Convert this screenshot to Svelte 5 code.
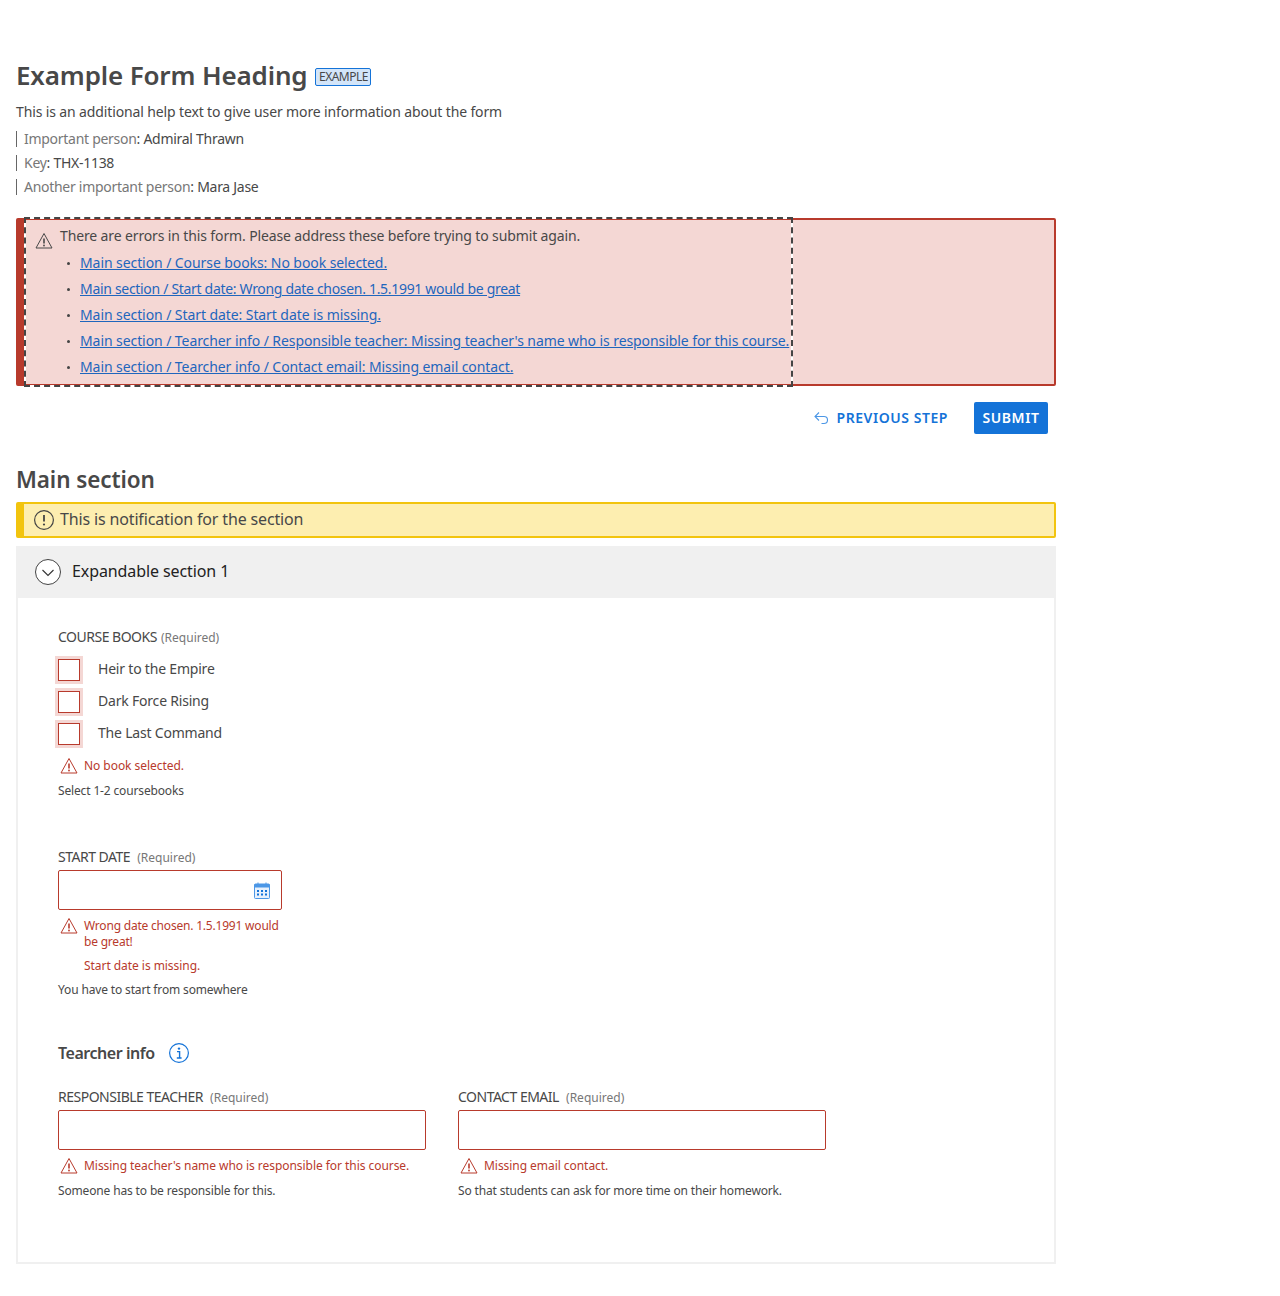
<script>
  const errors = [
    'Main section / Course books: No book selected.',
    'Main section / Start date: Wrong date chosen. 1.5.1991 would be great',
    'Main section / Start date: Start date is missing.',
    "Main section / Tearcher info / Responsible teacher: Missing teacher's name who is responsible for this course.",
    'Main section / Tearcher info / Contact email: Missing email contact.'
  ];
  const books = ['Heir to the Empire', 'Dark Force Rising', 'The Last Command'];
  const meta = [
    ['Important person', 'Admiral Thrawn'],
    ['Key', 'THX-1138'],
    ['Another important person', 'Mara Jase']
  ];
</script>

{#snippet warn(size = 18)}
  <svg class="warn" width={size} height={size} viewBox="0 0 18 18" fill="none" stroke="currentColor">
    <path d="M9 1.5 L17 16 H1 Z" stroke-linejoin="round"/>
    <path d="M9 6.5v5" stroke-width="1.6"/>
    <circle cx="9" cy="13.5" r=".9" fill="currentColor" stroke="none"/>
  </svg>
{/snippet}

<main class="page">
  <header class="head">
    <h1>Example Form Heading</h1>
    <span class="tag">EXAMPLE</span>
  </header>
  <p class="help">This is an additional help text to give user more information about the form</p>
  <ul class="meta">
    {#each meta as [k, v]}
      <li><span class="k">{k}</span>: {v}</li>
    {/each}
  </ul>

  <section class="alert">
    <div class="alert-inner">
      <div class="alert-title">{@render warn(18)}<span>There are errors in this form. Please address these before trying to submit again.</span></div>
      <ul class="errs">
        {#each errors as e, i}
          <li class:tight={i === 1}><a href="#top">{e}</a></li>
        {/each}
      </ul>
    </div>
  </section>

  <div class="actions">
    <button class="prev">
      <svg width="14" height="14" viewBox="0 0 14 14" fill="none" stroke="#4c97e6" stroke-width="1.1">
        <path d="M5 1.5 1 5.5 5 9.5M1 5.5H10a3 3 0 0 1 0 7H7.5"/>
      </svg>
      PREVIOUS STEP
    </button>
    <button class="submit">SUBMIT</button>
  </div>

  <h2>Main section</h2>
  <div class="notice">
    <svg width="20" height="20" viewBox="0 0 20 20" fill="none" stroke="#444">
      <circle cx="10" cy="10" r="9.4" stroke-width="1.2"/>
      <path d="M10 5v6.5" stroke-width="1.8"/>
      <circle cx="10" cy="14.5" r="1.1" fill="#444" stroke="none"/>
    </svg>
    <span>This is notification for the section</span>
  </div>

  <div class="exp-head">
    <span class="chev">
      <svg width="14" height="8" viewBox="0 0 14 8" fill="none" stroke="#333" stroke-width="1.1"><path d="M1.5 1 7 6.5 12.5 1"/></svg>
    </span>
    <span class="exp-title">Expandable section 1</span>
  </div>
  <div class="exp-body">
    <fieldset class="group">
      <div class="label">COURSE BOOKS <small>(Required)</small></div>
      {#each books as b}
        <label class="check"><input type="checkbox" /><span>{b}</span></label>
      {/each}
      <div class="err">{@render warn(18)}<span>No book selected.</span></div>
      <div class="hint">Select 1-2 coursebooks</div>
    </fieldset>

    <div class="field date">
      <div class="label">START DATE <small>(Required)</small></div>
      <div class="input">
        <svg class="cal" width="16" height="17" viewBox="0 0 16 17">
          <path d="M4 0.5v2.5M12 0.5v2.5" stroke="#4c97e6" fill="none"/>
          <rect x=".5" y="2" width="15" height="14.5" rx="1" fill="#e8f1fc" stroke="#4c97e6"/>
          <rect x=".5" y="2" width="15" height="3.5" fill="#4c97e6"/>
          <g fill="#1473d8">
            <rect x="3" y="8" width="2" height="2"/><rect x="7" y="8" width="2" height="2"/><rect x="11" y="8" width="2" height="2"/>
            <rect x="3" y="11.5" width="2" height="2"/><rect x="7" y="11.5" width="2" height="2"/><rect x="11" y="11.5" width="2" height="2"/>
          </g>
        </svg>
      </div>
      <div class="err">{@render warn(18)}<span class="narrow">Wrong date chosen. 1.5.1991 would be great!</span></div>
      <div class="err plain"><span>Start date is missing.</span></div>
      <div class="hint">You have to start from somewhere</div>
    </div>

    <div class="sub-head">
      <h3>Tearcher info</h3>
      <svg width="20" height="20" viewBox="0 0 20 20" fill="none" stroke="#1473d8">
        <circle cx="10" cy="10" r="9.4" stroke-width="1.2"/>
        <circle cx="10" cy="5.6" r="1.2" fill="#1473d8" stroke="none"/>
        <path d="M8 8.6h2.6v6M7.8 15h4.8" stroke-width="1.4"/>
      </svg>
    </div>

    <div class="pair">
      <div class="field">
        <div class="label">RESPONSIBLE TEACHER <small>(Required)</small></div>
        <div class="input"></div>
        <div class="err">{@render warn(18)}<span>Missing teacher's name who is responsible for this course.</span></div>
        <div class="hint">Someone has to be responsible for this.</div>
      </div>
      <div class="field">
        <div class="label">CONTACT EMAIL <small>(Required)</small></div>
        <div class="input"></div>
        <div class="err">{@render warn(18)}<span>Missing email contact.</span></div>
        <div class="hint">So that students can ask for more time on their homework.</div>
      </div>
    </div>
  </div>
</main>

<style>
  :global(body) {
    margin: 0;
    background: #fff;
    font-family: "Noto Sans", "Open Sans", sans-serif;
    color: #484848;
  }

  .page {
    width: 1040px;
    padding: 58px 0 32px 16px;
    font-size: 14px;
    line-height: 20px;
  }

  .head {
    display: flex;
    align-items: center;
    gap: 8px;
    height: 34px;
  }

  h1 {
    margin: 0;
    font-size: 26px;
    line-height: 34px;
    font-weight: 600;
    color: #484848;
    letter-spacing: -0.15px;
  }

  .tag {
    box-sizing: border-box;
    height: 18px;
    width: 56px;
    text-align: center;
    border: 1px solid #1473d8;
    border-radius: 2px;
    background: #d3e5f9;
    font-size: 12px;
    line-height: 16px;
    color: #484848;
    margin-top: 3px;
    letter-spacing: -0.5px;
  }

  .help {
    margin: 10px 0 0;
    letter-spacing: -0.13px;
  }

  .meta {
    list-style: none;
    margin: 9px 0 0;
    padding: 0;
  }

  .meta li {
    border-left: 1px solid #666;
    padding-left: 7px;
    height: 16px;
    line-height: 16px;
    margin: 4px 0 8px;
    letter-spacing: -0.28px;
  }

  .k {
    color: #777;
  }

  .alert {
    margin-top: 23px;
    height: 168px;
    box-sizing: border-box;
    background: #f4d7d4;
    border: 2px solid #b83a2c;
    border-left-width: 8px;
    border-radius: 2px;
  }

  .alert-inner {
    box-sizing: border-box;
    height: 166px;
    width: 765px;
    margin: -1px 0 0 2px;
    padding: 7px 0 0 9px;
    outline: 2px dashed #444;
    box-shadow: 0 0 0 2px #fff;
  }

  .alert-title {
    display: flex;
    gap: 7px;
    white-space: nowrap;
    letter-spacing: -0.13px;
  }

  .alert-title .warn {
    margin-top: 6px;
    flex: none;
  }

  .errs {
    margin: 0;
    padding: 0 0 0 45px;
    list-style: none;
    white-space: nowrap;
  }

  .errs li {
    position: relative;
    height: 26px;
    line-height: 26px;
    letter-spacing: -0.08px;
  }

  .errs li.tight {
    letter-spacing: -0.31px;
  }

  .errs li::before {
    content: "";
    position: absolute;
    left: -13px;
    top: 12px;
    width: 3px;
    height: 3px;
    border-radius: 50%;
    background: #444;
  }

  a {
    color: #1f66bd;
  }

  .actions {
    display: flex;
    justify-content: flex-end;
    align-items: center;
    gap: 26px;
    padding-right: 8px;
    margin-top: 16px;
  }

  button {
    font: inherit;
    font-weight: 600;
    letter-spacing: 0.55px;
    cursor: pointer;
    border: none;
  }

  .prev {
    display: flex;
    align-items: center;
    gap: 9px;
    background: none;
    color: #1473d8;
    padding: 0;
  }

  .submit {
    width: 74px;
    height: 32px;
    padding: 0;
    background: #1473d8;
    color: #fff;
    border-radius: 2px;
  }

  h2 {
    margin: 29px 0 0;
    font-size: 22.5px;
    line-height: 34px;
    font-weight: 600;
    color: #484848;
    letter-spacing: -0.1px;
  }

  .notice {
    display: flex;
    align-items: center;
    gap: 6px;
    box-sizing: border-box;
    height: 36px;
    margin-top: 5px;
    padding-left: 10px;
    background: #fdeeb0;
    border: 2px solid #f2c40e;
    border-left-width: 8px;
    border-radius: 2px;
    font-size: 16px;
    letter-spacing: -0.15px;
  }

  .notice span,
  .exp-title,
  .check span {
    margin-top: -2px;
  }

  .exp-head {
    display: flex;
    align-items: center;
    gap: 11px;
    height: 52px;
    margin-top: 8px;
    padding-left: 19px;
    background: #f0f0f0;
    font-size: 16px;
    color: #222;
    letter-spacing: -0.1px;
  }

  .chev {
    display: flex;
    align-items: center;
    justify-content: center;
    box-sizing: border-box;
    width: 26px;
    height: 26px;
    border: 1px solid #444;
    border-radius: 50%;
    background: #fff;
    padding-top: 2px;
  }

  .exp-body {
    box-sizing: border-box;
    height: 666px;
    border: 2px solid #f0f0f0;
    border-top: none;
    padding: 27px 40px 0;
  }

  .group {
    border: none;
    margin: 0;
    padding: 0;
  }

  .group .label {
    margin-bottom: 4px;
  }

  .label {
    height: 25px;
    line-height: 24px;
    font-size: 14px;
    letter-spacing: -0.5px;
  }

  .label small {
    font-size: 12px;
    color: #777;
    margin-left: 1px;
    letter-spacing: 0;
  }

  .field .label small {
    margin-left: 4px;
  }

  .check {
    display: flex;
    align-items: center;
    gap: 18px;
    height: 32px;
    letter-spacing: -0.2px;
  }

  .check input {
    appearance: none;
    box-sizing: border-box;
    width: 22px;
    height: 22px;
    margin: 0;
    background: #fff;
    border: 1px solid #b83a2c;
    box-shadow: 0 0 0 3px #f4d7d4;
    border-radius: 0;
  }

  .err {
    display: flex;
    gap: 6px;
    margin-top: 8px;
    padding-left: 2px;
    color: #b83a2c;
    font-size: 12px;
    line-height: 16px;
    letter-spacing: -0.05px;
  }

  .err .warn {
    flex: none;
    margin-top: -1px;
  }

  .err.plain {
    padding-left: 26px;
  }

  .narrow {
    letter-spacing: -0.2px;
  }

  .hint {
    font-size: 12px;
    line-height: 16px;
    margin-top: 8px;
    letter-spacing: -0.15px;
  }

  .date {
    width: 224px;
    margin-top: 46px;
  }

  .input {
    position: relative;
    box-sizing: border-box;
    height: 40px;
    border: 1px solid #b83a2c;
    border-radius: 2px;
    background: #fff;
  }

  .cal {
    position: absolute;
    right: 11px;
    top: 11px;
  }

  .sub-head {
    display: flex;
    align-items: center;
    gap: 14px;
    margin-top: 40px;
    height: 30px;
  }

  h3 {
    margin: 0;
    font-size: 16px;
    font-weight: 600;
    letter-spacing: -0.45px;
    color: #484848;
  }

  .pair {
    display: flex;
    gap: 32px;
    margin-top: 17px;
  }

  .pair .field {
    width: 368px;
  }
</style>
